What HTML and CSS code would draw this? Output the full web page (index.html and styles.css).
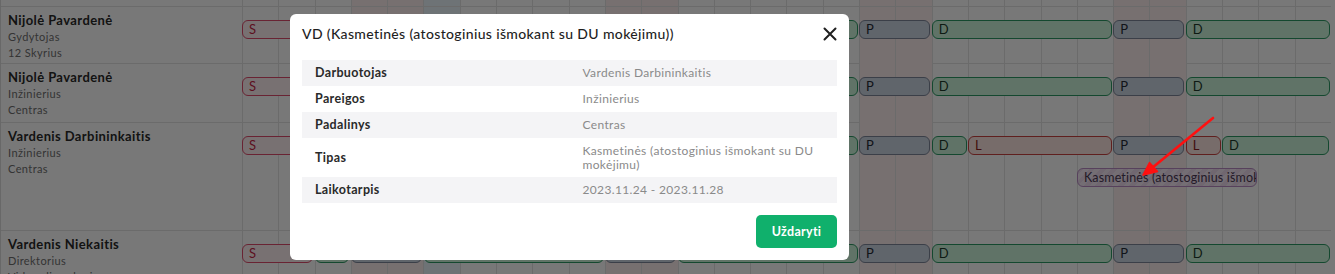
FILE: index.html
```html
<!DOCTYPE html>
<html lang="lt">
<head>
<meta charset="utf-8">
<title>Grafikas</title>
<link rel="stylesheet" href="styles.css">
</head>
<body>
<div class="board">
  <div class="row row--head">
    <div class="who"></div>
    <div class="tl tl--head">
      <div class="days"><i class="d"></i><i class="d"></i><i class="d"></i><i class="d we"></i><i class="d we"></i><i class="d td"></i><i class="d"></i><i class="d"></i><i class="d"></i><i class="d"></i><i class="d we"></i><i class="d we"></i><i class="d"></i><i class="d"></i><i class="d"></i><i class="d"></i><i class="d"></i><i class="d we"></i><i class="d we"></i><i class="d"></i><i class="d"></i><i class="d"></i><i class="d"></i><i class="d"></i><i class="d we"></i><i class="d we"></i><i class="d"></i><i class="d"></i><i class="d"></i><i class="d"></i></div>
    </div>
  </div>

  <div class="row row--r1">
    <div class="who">
      <div class="who__name">Nijolė Pavardenė</div>
      <div class="who__sub">Gydytojas</div>
      <div class="who__sub">12 Skyrius</div>
    </div>
    <div class="tl">
      <div class="days"><i class="d"></i><i class="d"></i><i class="d"></i><i class="d we"></i><i class="d we"></i><i class="d td"></i><i class="d"></i><i class="d"></i><i class="d"></i><i class="d"></i><i class="d we"></i><i class="d we"></i><i class="d"></i><i class="d"></i><i class="d"></i><i class="d"></i><i class="d"></i><i class="d we"></i><i class="d we"></i><i class="d"></i><i class="d"></i><i class="d"></i><i class="d"></i><i class="d"></i><i class="d we"></i><i class="d we"></i><i class="d"></i><i class="d"></i><i class="d"></i><i class="d"></i></div>
      <div class="bar bar--s" style="grid-column: 1 / span 2">S</div>
      <div class="bar bar--d" style="grid-column: 3 / span 1">D</div>
      <div class="bar bar--p" style="grid-column: 4 / span 2">P</div>
      <div class="bar bar--d" style="grid-column: 6 / span 5">D</div>
      <div class="bar bar--p" style="grid-column: 11 / span 2">P</div>
      <div class="bar bar--d" style="grid-column: 13 / span 5">D</div>
      <div class="bar bar--p" style="grid-column: 18 / span 2">P</div>
      <div class="bar bar--d" style="grid-column: 20 / span 5">D</div>
      <div class="bar bar--p" style="grid-column: 25 / span 2">P</div>
      <div class="bar bar--d" style="grid-column: 27 / span 4">D</div>
    </div>
  </div>

  <div class="row row--r2">
    <div class="who">
      <div class="who__name">Nijolė Pavardenė</div>
      <div class="who__sub">Inžinierius</div>
      <div class="who__sub">Centras</div>
    </div>
    <div class="tl">
      <div class="days"><i class="d"></i><i class="d"></i><i class="d"></i><i class="d we"></i><i class="d we"></i><i class="d td"></i><i class="d"></i><i class="d"></i><i class="d"></i><i class="d"></i><i class="d we"></i><i class="d we"></i><i class="d"></i><i class="d"></i><i class="d"></i><i class="d"></i><i class="d"></i><i class="d we"></i><i class="d we"></i><i class="d"></i><i class="d"></i><i class="d"></i><i class="d"></i><i class="d"></i><i class="d we"></i><i class="d we"></i><i class="d"></i><i class="d"></i><i class="d"></i><i class="d"></i></div>
      <div class="bar bar--s" style="grid-column: 1 / span 2">S</div>
      <div class="bar bar--d" style="grid-column: 3 / span 1">D</div>
      <div class="bar bar--p" style="grid-column: 4 / span 2">P</div>
      <div class="bar bar--d" style="grid-column: 6 / span 5">D</div>
      <div class="bar bar--p" style="grid-column: 11 / span 2">P</div>
      <div class="bar bar--d" style="grid-column: 13 / span 5">D</div>
      <div class="bar bar--p" style="grid-column: 18 / span 2">P</div>
      <div class="bar bar--d" style="grid-column: 20 / span 5">D</div>
      <div class="bar bar--p" style="grid-column: 25 / span 2">P</div>
      <div class="bar bar--d" style="grid-column: 27 / span 4">D</div>
    </div>
  </div>

  <div class="row row--r3">
    <div class="who">
      <div class="who__name">Vardenis Darbininkaitis</div>
      <div class="who__sub">Inžinierius</div>
      <div class="who__sub">Centras</div>
    </div>
    <div class="tl">
      <div class="days"><i class="d"></i><i class="d"></i><i class="d"></i><i class="d we"></i><i class="d we"></i><i class="d td"></i><i class="d"></i><i class="d"></i><i class="d"></i><i class="d"></i><i class="d we"></i><i class="d we"></i><i class="d"></i><i class="d"></i><i class="d"></i><i class="d"></i><i class="d"></i><i class="d we"></i><i class="d we"></i><i class="d"></i><i class="d"></i><i class="d"></i><i class="d"></i><i class="d"></i><i class="d we"></i><i class="d we"></i><i class="d"></i><i class="d"></i><i class="d"></i><i class="d"></i></div>
      <div class="bar bar--s" style="grid-column: 1 / span 2">S</div>
      <div class="bar bar--d" style="grid-column: 3 / span 1">D</div>
      <div class="bar bar--p" style="grid-column: 4 / span 2">P</div>
      <div class="bar bar--d" style="grid-column: 6 / span 5">D</div>
      <div class="bar bar--p" style="grid-column: 11 / span 2">P</div>
      <div class="bar bar--d" style="grid-column: 13 / span 5">D</div>
      <div class="bar bar--p" style="grid-column: 18 / span 2">P</div>
      <div class="bar bar--d" style="grid-column: 20 / span 1">D</div>
      <div class="bar bar--l" style="grid-column: 21 / span 4">L</div>
      <div class="bar bar--p" style="grid-column: 25 / span 2">P</div>
      <div class="bar bar--l" style="grid-column: 27 / span 1">L</div>
      <div class="bar bar--d" style="grid-column: 28 / span 3">D</div>
      <div class="bar bar--k" style="grid-column: 24 / span 5">Kasmetinės (atostoginius išmokant su DU mokėjimu)</div>
    </div>
  </div>

  <div class="row row--r4">
    <div class="who">
      <div class="who__name">Vardenis Niekaitis</div>
      <div class="who__sub">Direktorius</div>
      <div class="who__sub">Vidaus ligų skyrius</div>
    </div>
    <div class="tl">
      <div class="days"><i class="d"></i><i class="d"></i><i class="d"></i><i class="d we"></i><i class="d we"></i><i class="d td"></i><i class="d"></i><i class="d"></i><i class="d"></i><i class="d"></i><i class="d we"></i><i class="d we"></i><i class="d"></i><i class="d"></i><i class="d"></i><i class="d"></i><i class="d"></i><i class="d we"></i><i class="d we"></i><i class="d"></i><i class="d"></i><i class="d"></i><i class="d"></i><i class="d"></i><i class="d we"></i><i class="d we"></i><i class="d"></i><i class="d"></i><i class="d"></i><i class="d"></i></div>
      <div class="bar bar--s" style="grid-column: 1 / span 2">S</div>
      <div class="bar bar--d" style="grid-column: 3 / span 1">D</div>
      <div class="bar bar--p" style="grid-column: 4 / span 2">P</div>
      <div class="bar bar--d" style="grid-column: 6 / span 5">D</div>
      <div class="bar bar--p" style="grid-column: 11 / span 2">P</div>
      <div class="bar bar--d" style="grid-column: 13 / span 5">D</div>
      <div class="bar bar--p" style="grid-column: 18 / span 2">P</div>
      <div class="bar bar--d" style="grid-column: 20 / span 5">D</div>
      <div class="bar bar--p" style="grid-column: 25 / span 2">P</div>
      <div class="bar bar--d" style="grid-column: 27 / span 4">D</div>
    </div>
  </div>
</div>

<div class="overlay"></div>

<div class="modal" role="dialog">
  <div class="modal__head">
    <div class="modal__title">VD (Kasmetinės (atostoginius išmokant su DU mokėjimu))</div>
    <button class="modal__close" aria-label="Uždaryti">
      <svg width="14" height="14" viewBox="0 0 14 14"><path d="M1.5 1.5 L12.5 12.5 M12.5 1.5 L1.5 12.5" stroke="#1f1f1f" stroke-width="2" stroke-linecap="round" fill="none"/></svg>
    </button>
  </div>
  <table class="info">
    <tr><th>Darbuotojas</th><td>Vardenis Darbininkaitis</td></tr>
    <tr><th>Pareigos</th><td>Inžinierius</td></tr>
    <tr><th>Padalinys</th><td>Centras</td></tr>
    <tr><th>Tipas</th><td>Kasmetinės (atostoginius išmokant su DU mokėjimu)</td></tr>
    <tr><th>Laikotarpis</th><td>2023.11.24 - 2023.11.28</td></tr>
  </table>
  <div class="modal__foot">
    <button class="btn">Uždaryti</button>
  </div>
</div>

<svg class="arrow" width="90" height="70" viewBox="0 0 90 70">
  <line x1="79" y1="7" x2="18" y2="57" stroke="#ff1010" stroke-width="2.6" stroke-linecap="round"/>
  <path d="M9 64 L15.5 51.5 L23.5 60.5 Z" fill="#ff1010" stroke="#ff1010" stroke-width="1.5" stroke-linejoin="round"/>
</svg>
</body>
</html>
```

FILE: styles.css
```css
* { box-sizing: border-box; }

html, body {
  margin: 0;
  padding: 0;
  background: #ffffff;
  overflow: hidden;
}

body {
  width: 1335px;
  height: 274px;
  font-family: "Lato", "Noto Sans", sans-serif;
  color: #222;
  position: relative;
}

.board {
  width: 1331px;
  height: 274px;
  overflow: hidden;
  display: flex;
  flex-direction: column;
  border-left: 1px solid #dedede;
}

.row {
  display: flex;
  flex: none;
  border-bottom: 1px solid #e3e3e3;
}

.row--head { height: 7px; }
.row--r1 { height: 57px; }
.row--r2 { height: 59px; }
.row--r3 { height: 108px; }
.row--r4 { height: 43px; border-bottom: 0; overflow: hidden; }

.who {
  width: 241px;
  flex: none;
  padding: 5px 7px;
}

.who__name {
  font-size: 13px;
  line-height: 17px;
  font-weight: 700;
  color: #2a2a2a;
  letter-spacing: 0.4px;
  white-space: nowrap;
}

.who__sub {
  font-size: 11px;
  line-height: 15.5px;
  color: #6f6f6f;
  letter-spacing: 0.4px;
  white-space: nowrap;
}

.tl {
  flex: none;
  width: 1089px;
  display: grid;
  grid-template-columns: repeat(30, minmax(0, 1fr));
  grid-template-rows: 13px 19px 13px 19px 1fr;
}

.tl--head {
  grid-template-rows: 1fr;
}

.days {
  grid-column: 1 / -1;
  grid-row: 1 / -1;
  display: grid;
  grid-template-columns: repeat(30, minmax(0, 1fr));
}

.d {
  border-left: 1px solid #e3e3e3;
  display: block;
  min-width: 0;
}

.d.we { background: #fdeeee; }
.d.td { background: #e9f5fa; }

.bar {
  grid-row: 2;
  min-width: 0;
  margin-right: 1.5px;
  border: 1px solid;
  border-radius: 6px;
  font-size: 13px;
  line-height: 17px;
  padding-left: 6px;
  white-space: nowrap;
  overflow: hidden;
  letter-spacing: 0.3px;
}

.bar--s { background: #fff0f3; border-color: #e04c6c; color: #c62645; }
.bar--d { background: #cdf5dc; border-color: #2c9964; color: #1f3a2c; }
.bar--p { background: #cdd6e3; border-color: #7d879a; color: #262c36; }
.bar--l { background: #fde6e2; border-color: #c94240; color: #8c1f22; }
.bar--k {
  grid-row: 4;
  background: repeating-linear-gradient(135deg, #eddcef 0 4px, #f6e9f7 4px 8px);
  border-color: #b98bc4;
  color: #4c3a55;
  font-size: 12.5px;
  padding-left: 6px;
  padding-right: 5px;
  letter-spacing: 0.15px;
}

.overlay {
  position: fixed;
  inset: 0;
  background: rgba(0, 0, 0, 0.53);
}

.modal {
  position: absolute;
  left: 290px;
  top: 14px;
  width: 559px;
  background: #fff;
  border-radius: 6px;
  padding: 10px 12px 12px;
}

.modal__head {
  display: flex;
  align-items: center;
  justify-content: space-between;
  height: 20px;
  margin-bottom: 16px;
}

.modal__title {
  font-size: 14px;
  line-height: 20px;
  color: #1f1f1f;
  letter-spacing: 0.35px;
  font-weight: 500;
}

.modal__close {
  border: 0;
  background: none;
  padding: 0;
  width: 14px;
  height: 14px;
  margin-right: 0;
  display: flex;
  cursor: pointer;
}

.info {
  width: 100%;
  border-collapse: collapse;
  table-layout: fixed;
}

.info tr:nth-child(odd) { background: #f4f4f6; }

.info th,
.info td {
  padding: 6px 13px;
  text-align: left;
  vertical-align: middle;
}

.info th {
  font-size: 12.5px;
  line-height: 14px;
  font-weight: 700;
  color: #2a2a2a;
  letter-spacing: 0.35px;
}

.info td {
  font-size: 12px;
  line-height: 13.5px;
  color: #8a8a8a;
  letter-spacing: 0.35px;
}

.modal__foot {
  display: flex;
  justify-content: flex-end;
  padding-top: 12px;
}

.btn {
  width: 81px;
  height: 33px;
  border: 0;
  border-radius: 5px;
  background: #10b06c;
  color: #fff;
  font-family: inherit;
  font-size: 12.5px;
  font-weight: 700;
  letter-spacing: 0.3px;
  cursor: pointer;
}

.arrow {
  position: absolute;
  left: 1134px;
  top: 111px;
}
```
